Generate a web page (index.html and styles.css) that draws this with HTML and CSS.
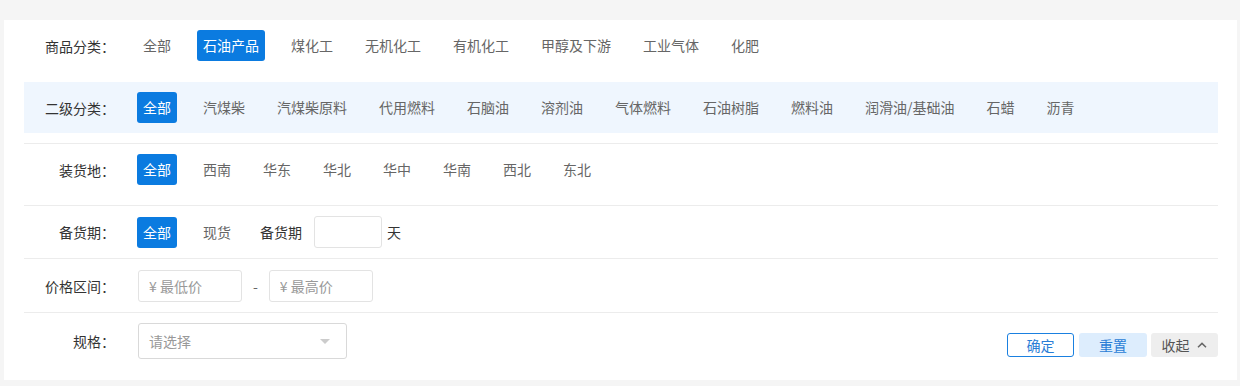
FILE: index.html
```html
<!DOCTYPE html>
<html lang="zh-CN">
<head>
    <meta charset="UTF-8">
    <title>商品筛选</title>
    <link rel="stylesheet" href="styles.css">
</head>
<body>
    <div class="filter-card">
        <div class="filter-row row-first">
            <div class="filter-label">商品分类：</div>
            <div class="filter-items">
                <span class="item">全部</span>
                <span class="item active">石油产品</span>
                <span class="item">煤化工</span>
                <span class="item">无机化工</span>
                <span class="item">有机化工</span>
                <span class="item">甲醇及下游</span>
                <span class="item">工业气体</span>
                <span class="item">化肥</span>
            </div>
        </div>
        <div class="filter-row row-sub">
            <div class="filter-label">二级分类：</div>
            <div class="filter-items">
                <span class="item active">全部</span>
                <span class="item">汽煤柴</span>
                <span class="item">汽煤柴原料</span>
                <span class="item">代用燃料</span>
                <span class="item">石脑油</span>
                <span class="item">溶剂油</span>
                <span class="item">气体燃料</span>
                <span class="item">石油树脂</span>
                <span class="item">燃料油</span>
                <span class="item">润滑油/基础油</span>
                <span class="item">石蜡</span>
                <span class="item">沥青</span>
            </div>
        </div>
        <div class="filter-row row-line row-tall">
            <div class="filter-label">装货地：</div>
            <div class="filter-items">
                <span class="item active">全部</span>
                <span class="item">西南</span>
                <span class="item">华东</span>
                <span class="item">华北</span>
                <span class="item">华中</span>
                <span class="item">华南</span>
                <span class="item">西北</span>
                <span class="item">东北</span>
            </div>
        </div>
        <div class="filter-row row-line">
            <div class="filter-label">备货期：</div>
            <div class="filter-items">
                <span class="item active">全部</span>
                <span class="item">现货</span>
                <span class="stock-label">备货期</span>
                <input class="text-input days-input" type="text">
                <span class="unit">天</span>
            </div>
        </div>
        <div class="filter-row row-line row-price">
            <div class="filter-label">价格区间：</div>
            <div class="filter-items">
                <input class="text-input price-input" type="text" placeholder="¥ 最低价">
                <span class="dash">-</span>
                <input class="text-input price-input" type="text" placeholder="¥ 最高价">
            </div>
        </div>
        <div class="filter-row row-line row-last">
            <div class="filter-label">规格：</div>
            <div class="filter-items">
                <div class="select-box">
                    <span class="placeholder">请选择</span>
                    <span class="caret"></span>
                </div>
            </div>
            <div class="actions">
                <button class="btn btn-confirm">确定</button>
                <button class="btn btn-reset">重置</button>
                <button class="btn btn-fold">收起
                    <svg width="12" height="12" viewBox="0 0 12 12"><path d="M2 8.2 L6 4.4 L10 8.2" fill="none" stroke="#666" stroke-width="1.5"/></svg>
                </button>
            </div>
        </div>
    </div>
</body>
</html>
```

FILE: styles.css
```css
body {
    margin: 0;
    background-color: #f5f5f5;
    font-family: "Microsoft YaHei", "Noto Sans CJK SC", "Noto Sans", sans-serif;
    font-size: 14px;
    color: #666;
}
.filter-card {
    margin: 20px 3px 6px 4px;
    padding: 0 19px 0 20px;
    background-color: #fff;
}
.filter-row {
    display: flex;
    align-items: center;
    padding: 10px 0;
}
.row-first {
    padding-bottom: 21px;
}
.row-sub {
    background-color: #eff6fe;
    margin-bottom: 10px;
}
.row-line {
    border-top: 1px solid #ececec;
}
.row-tall {
    padding-bottom: 20px;
}
.row-price {
    padding-top: 11px;
}
.row-last {
    padding-bottom: 21px;
}
.filter-label {
    width: 91px;
    margin-right: 22px;
    text-align: right;
    color: #333;
    flex-shrink: 0;
}
.filter-items {
    display: flex;
    align-items: center;
    gap: 20px;
    flex: 1;
}
.item {
    height: 31px;
    line-height: 31px;
    padding: 0 6px;
    border-radius: 3px;
    color: #666;
    white-space: nowrap;
}
.item.active {
    background-color: #0b7be0;
    color: #fff;
}
.stock-label {
    color: #333;
    margin-left: 3px;
    margin-right: -8px;
}
.text-input {
    box-sizing: border-box;
    height: 32px;
    border: 1px solid #e3e3e3;
    border-radius: 3px;
    padding: 0 10px;
    font-family: inherit;
    font-size: 14px;
    color: #333;
    outline: none;
}
.text-input::placeholder {
    color: #999;
}
.days-input {
    width: 68px;
}
.unit {
    color: #333;
    margin-left: -15px;
}
.price-input {
    width: 104px;
    margin-left: 1px;
}
.dash {
    color: #666;
    margin: 0 -10px 0 -9px;
}
.select-box {
    box-sizing: border-box;
    width: 209px;
    height: 36px;
    margin-left: 1px;
    border: 1px solid #d9d9d9;
    border-radius: 3px;
    padding: 0 10px;
    display: flex;
    align-items: center;
    justify-content: space-between;
}
.placeholder {
    color: #999;
}
.caret {
    width: 0;
    height: 0;
    border-left: 5px solid transparent;
    border-right: 5px solid transparent;
    border-top: 5px solid #ccc;
    margin-right: 6px;
}
.actions {
    display: flex;
    gap: 4px;
    align-self: flex-end;
    margin-bottom: 2px;
}
.btn {
    box-sizing: border-box;
    height: 24px;
    width: 68px;
    border: 1px solid transparent;
    border-radius: 3px;
    font-family: inherit;
    font-size: 14px;
    padding: 0;
    display: flex;
    align-items: center;
    justify-content: center;
    gap: 6px;
    cursor: pointer;
}
.btn-confirm {
    width: 67px;
    margin-right: 1px;
    background-color: #fff;
    border-color: #1a80e0;
    color: #2a7dd6;
}
.btn-reset {
    background-color: #ddedfd;
    color: #2a7dd6;
}
.btn-fold {
    width: 67px;
    background-color: #eeeeee;
    color: #555;
}
```
